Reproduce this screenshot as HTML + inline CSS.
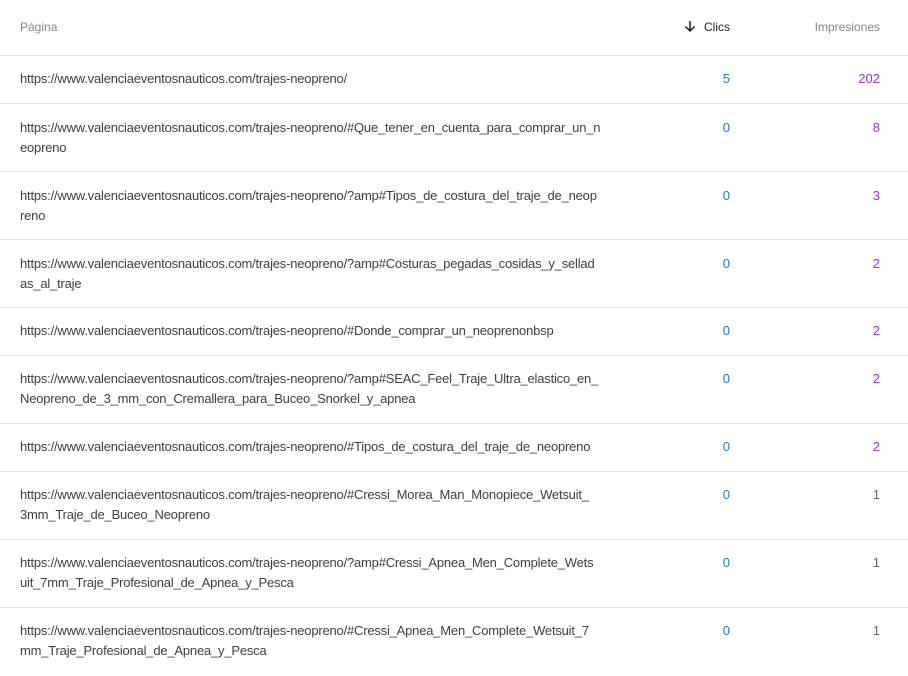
<!DOCTYPE html>
<html><head><meta charset="utf-8"><style>
body{margin:0;background:#fff;font-family:"Liberation Sans",Arial,sans-serif;font-size:13px;color:#3c4043;width:908px;height:674px;overflow:hidden}
.r{position:relative;border-bottom:1px solid #e0e0e0;box-sizing:border-box}
.u{position:absolute;left:20px;line-height:20px;white-space:nowrap;letter-spacing:-0.2px}
.c{position:absolute;right:178px;line-height:20px;color:#1a73e8}
.i{position:absolute;right:28px;line-height:20px;color:#9334e6}
.g{color:#5f6368}
.h{height:56px;font-size:12px;color:#80868b}
</style></head><body>
<div class="r h"><span class="u" style="top:17px;letter-spacing:0">Página</span>
<span class="c" style="top:17px;color:#202124"><svg width="12" height="12" viewBox="0 0 12 12" style="vertical-align:-1px;margin-right:8px"><path d="M6 1v10M1.5 6.5L6 11l4.5-4.5" stroke="#202124" stroke-width="1.5" fill="none"/></svg>Clics</span>
<span class="i" style="top:17px;color:#80868b">Impresiones</span></div>

<div class="r" style="height:48px"><span class="u" style="top:13px">https://www.valenciaeventosnauticos.com/trajes-neopreno/</span><span class="c" style="top:13px">5</span><span class="i" style="top:13px">202</span></div>

<div class="r" style="height:68px"><span class="u" style="top:14px">https://www.valenciaeventosnauticos.com/trajes-neopreno/#Que_tener_en_cuenta_para_comprar_un_n<br>eopreno</span><span class="c" style="top:14px">0</span><span class="i" style="top:14px">8</span></div>

<div class="r" style="height:68px"><span class="u" style="top:14px">https://www.valenciaeventosnauticos.com/trajes-neopreno/?amp#Tipos_de_costura_del_traje_de_neop<br>reno</span><span class="c" style="top:14px">0</span><span class="i" style="top:14px">3</span></div>

<div class="r" style="height:68px"><span class="u" style="top:14px">https://www.valenciaeventosnauticos.com/trajes-neopreno/?amp#Costuras_pegadas_cosidas_y_sellad<br>as_al_traje</span><span class="c" style="top:14px">0</span><span class="i" style="top:14px">2</span></div>

<div class="r" style="height:48px"><span class="u" style="top:13px">https://www.valenciaeventosnauticos.com/trajes-neopreno/#Donde_comprar_un_neoprenonbsp</span><span class="c" style="top:13px">0</span><span class="i" style="top:13px">2</span></div>

<div class="r" style="height:68px"><span class="u" style="top:13px">https://www.valenciaeventosnauticos.com/trajes-neopreno/?amp#SEAC_Feel_Traje_Ultra_elastico_en_<br>Neopreno_de_3_mm_con_Cremallera_para_Buceo_Snorkel_y_apnea</span><span class="c" style="top:13px">0</span><span class="i" style="top:13px">2</span></div>

<div class="r" style="height:48px"><span class="u" style="top:13px">https://www.valenciaeventosnauticos.com/trajes-neopreno/#Tipos_de_costura_del_traje_de_neopreno</span><span class="c" style="top:13px">0</span><span class="i" style="top:13px">2</span></div>

<div class="r" style="height:68px"><span class="u" style="top:13px">https://www.valenciaeventosnauticos.com/trajes-neopreno/#Cressi_Morea_Man_Monopiece_Wetsuit_<br>3mm_Traje_de_Buceo_Neopreno</span><span class="c" style="top:13px">0</span><span class="i g" style="top:13px">1</span></div>

<div class="r" style="height:68px"><span class="u" style="top:13px">https://www.valenciaeventosnauticos.com/trajes-neopreno/?amp#Cressi_Apnea_Men_Complete_Wets<br>uit_7mm_Traje_Profesional_de_Apnea_y_Pesca</span><span class="c" style="top:13px">0</span><span class="i g" style="top:13px">1</span></div>

<div class="r" style="height:68px;border:0"><span class="u" style="top:13px">https://www.valenciaeventosnauticos.com/trajes-neopreno/#Cressi_Apnea_Men_Complete_Wetsuit_7<br>mm_Traje_Profesional_de_Apnea_y_Pesca</span><span class="c" style="top:13px">0</span><span class="i g" style="top:13px">1</span></div>
</body></html>
